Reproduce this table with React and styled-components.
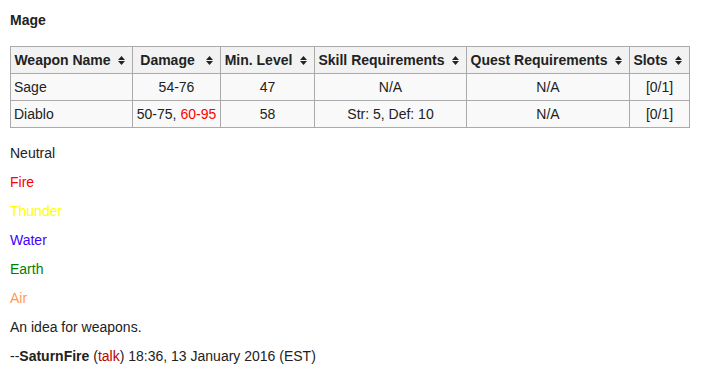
import React from 'react';
import styled, { createGlobalStyle } from 'styled-components';

const sortIcon =
  "url(\"data:image/svg+xml;utf8,<svg xmlns='http://www.w3.org/2000/svg' width='7' height='9' viewBox='0 0 7 9'><path d='M3.5 0 L7 4 L0 4 Z M0 5 L7 5 L3.5 9 Z' fill='%23222'/></svg>\")";

const GlobalStyle = createGlobalStyle`
  body {
    margin: 0;
    background: #fff;
    color: #222;
    font-family: "Liberation Sans", Arial, sans-serif;
    font-size: 14px;
  }
`;

const Page = styled.div`
  padding: 11px 10px 10px;
`;

const Title = styled.div`
  font-weight: bold;
  line-height: 19px;
  margin: 0 0 16px;
`;

const Table = styled.table`
  border-collapse: collapse;
  background: #f9f9f9;
  border: 1px solid #aaa;
  line-height: 18px;
  margin-bottom: 16px;

  th, td {
    border: 1px solid #aaa;
    padding: 4px 3px;
  }
`;

const Head = styled.th`
  background-color: #f2f2f2;
  background-image: ${sortIcon};
  background-repeat: no-repeat;
  background-position: right 7px center;
  padding-right: 21px !important;
  text-align: center;
  font-weight: bold;
  white-space: nowrap;
  width: ${p => p.$w}px;
  box-sizing: border-box;
`;

const Cell = styled.td`
  text-align: ${p => (p.$left ? 'left' : 'center')};
`;

const Hot = styled.span`
  color: #ff0000;
`;

const Line = styled.p`
  margin: 0 0 10px;
  line-height: 19px;
  color: ${p => p.$color || '#222'};
`;

const Talk = styled.span`
  color: #ba0000;
`;

const heads = [
  ['Weapon Name', 122],
  ['Damage', 88],
  ['Min. Level', 94],
  ['Skill Requirements', 152],
  ['Quest Requirements', 163],
  ['Slots', 60],
];

const elements = [
  ['Neutral', '#222'],
  ['Fire', '#ff0000'],
  ['Thunder', '#ffff00'],
  ['Water', '#4400ff'],
  ['Earth', '#008000'],
  ['Air', '#ff9955'],
];

const App = () => {
  return (
    <Page>
      <GlobalStyle />
      <Title>Mage</Title>
      <Table>
        <thead>
          <tr>
            {heads.map(([h, w]) => (
              <Head key={h} $w={w}>{h}</Head>
            ))}
          </tr>
        </thead>
        <tbody>
          <tr>
            <Cell $left>Sage</Cell>
            <Cell>54-76</Cell>
            <Cell>47</Cell>
            <Cell>N/A</Cell>
            <Cell>N/A</Cell>
            <Cell>[0/1]</Cell>
          </tr>
          <tr>
            <Cell $left>Diablo</Cell>
            <Cell>50-75, <Hot>60-95</Hot></Cell>
            <Cell>58</Cell>
            <Cell>Str: 5, Def: 10</Cell>
            <Cell>N/A</Cell>
            <Cell>[0/1]</Cell>
          </tr>
        </tbody>
      </Table>
      {elements.map(([name, color]) => (
        <Line key={name} $color={color}>{name}</Line>
      ))}
      <Line>An idea for weapons.</Line>
      <Line>
        --<b>SaturnFire</b> (<Talk>talk</Talk>) 18:36, 13 January 2016 (EST)
      </Line>
    </Page>
  );
};

export default App;
